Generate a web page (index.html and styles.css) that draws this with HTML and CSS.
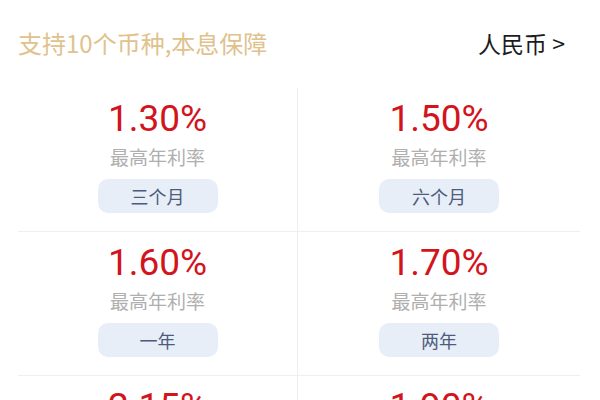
FILE: index.html
```html
<!DOCTYPE html>
<html lang="zh-CN">
<head>
<meta charset="utf-8">
<link rel="stylesheet" href="styles.css">
</head>
<body>
<div class="page">
  <div class="header">
    <span class="slogan">支持10个币种,本息保障</span>
    <span class="currency">人民币 &gt;</span>
  </div>
  <div class="grid">
    <div class="cell left">
      <div class="rate">1.30%</div>
      <div class="label">最高年利率</div>
      <div class="term">三个月</div>
    </div>
    <div class="cell">
      <div class="rate">1.50%</div>
      <div class="label">最高年利率</div>
      <div class="term">六个月</div>
    </div>
    <div class="cell left">
      <div class="rate">1.60%</div>
      <div class="label">最高年利率</div>
      <div class="term">一年</div>
    </div>
    <div class="cell">
      <div class="rate">1.70%</div>
      <div class="label">最高年利率</div>
      <div class="term">两年</div>
    </div>
    <div class="cell left">
      <div class="rate">2.15%</div>
      <div class="label">最高年利率</div>
      <div class="term">三年</div>
    </div>
    <div class="cell">
      <div class="rate">1.90%</div>
      <div class="label">最高年利率</div>
      <div class="term">五年</div>
    </div>
  </div>
</div>
</body>
</html>
```

FILE: styles.css
```css
html, body {
  margin: 0;
  padding: 0;
  background: #ffffff;
  overflow: hidden;
}
body {
  font-family: Roboto, "Noto Sans CJK SC", sans-serif;
}
.page {
  width: 600px;
  height: 400px;
  overflow: hidden;
}
.header {
  height: 88px;
  display: flex;
  align-items: center;
  justify-content: space-between;
  padding: 0 35px 2px 18px;
  box-sizing: border-box;
}
.slogan {
  font-family: "Noto Sans CJK SC", sans-serif;
  font-size: 24px;
  color: #e0c28d;
  line-height: 30px;
}
.currency {
  font-family: "Noto Sans CJK SC", sans-serif;
  font-size: 23px;
  color: #1c1c1c;
  line-height: 30px;
}
.grid {
  display: grid;
  grid-template-columns: 280px 282px;
  margin: 0 20px 0 18px;
}
.cell {
  display: flex;
  flex-direction: column;
  align-items: center;
  height: 144px;
  box-sizing: border-box;
  padding-top: 9px;
  border-bottom: 1px solid #efefef;
}
.cell.left {
  border-right: 1px solid #efefef;
}
.rate {
  font-family: Roboto, sans-serif;
  font-size: 37px;
  line-height: 44px;
  color: #d2141d;
}
.label {
  font-family: "Noto Sans CJK SC", sans-serif;
  font-size: 19px;
  line-height: 24px;
  color: #afafaf;
  margin-top: 4px;
}
.term {
  margin-top: 10px;
  width: 120px;
  height: 34px;
  border-radius: 10px;
  background: #e8eef8;
  display: flex;
  align-items: center;
  justify-content: center;
  font-family: "Noto Sans CJK SC", sans-serif;
  font-size: 18px;
  color: #4c5c7a;
}
```
